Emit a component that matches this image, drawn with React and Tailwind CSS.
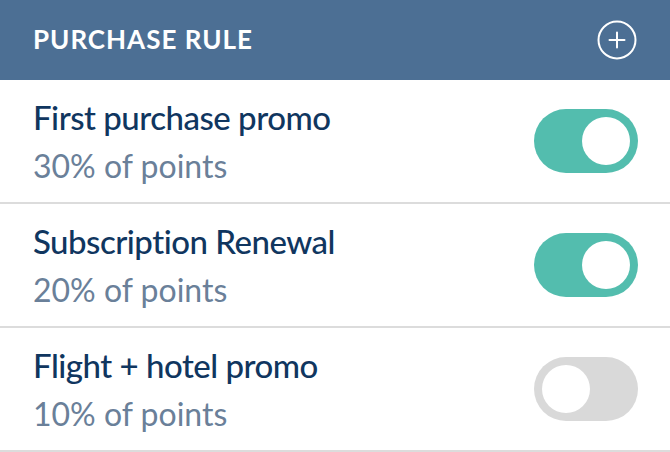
import React from 'react';

const rules = [
  { id: 1, name: 'First purchase promo', points: '30% of points', active: true },
  { id: 2, name: 'Subscription Renewal', points: '20% of points', active: true },
  { id: 3, name: 'Flight + hotel promo', points: '10% of points', active: false },
];

const Toggle = ({ on }) => (
  <div
    className={`self-center w-[104px] h-[64px] rounded-full p-[8px] flex ${
      on ? 'bg-[#53bdae] justify-end' : 'bg-[#d9d9d9] justify-start'
    }`}
  >
    <div className="w-[48px] h-[48px] rounded-full bg-white" />
  </div>
);

export default function App() {
  return (
    <div className="w-[670px] h-[452px] bg-white overflow-hidden" style={{ fontFamily: 'Lato, "Open Sans", sans-serif' }}>
      <div className="h-[80px] bg-[#4c6f94] flex items-center justify-between pl-[33px] pr-[33px]">
        <h1 className="text-white text-[26px] leading-[30px] mb-[3px] font-bold tracking-[1px]">PURCHASE RULE</h1>
        <svg width="40" height="40" viewBox="0 0 40 40" fill="none" stroke="white" strokeWidth="2">
          <circle cx="20" cy="20" r="18.5" />
          <path d="M20 12.5v15M12.5 20h15" strokeLinecap="round" />
        </svg>
      </div>
      {rules.map(rule => (
        <div key={rule.id} className="h-[124px] border-b-2 border-[#dcdcdc] flex items-stretch justify-between pl-[33px] pr-[32px]">
          <div className="flex flex-col pt-[17px]">
            <p className="text-[#10365f] text-[33px] leading-[40px] font-medium tracking-[-0.5px]">{rule.name}</p>
            <p className="text-[#6a8099] text-[32px] leading-[36px] mt-[11px]">{rule.points}</p>
          </div>
          <Toggle on={rule.active} />
        </div>
      ))}
    </div>
  );
}
